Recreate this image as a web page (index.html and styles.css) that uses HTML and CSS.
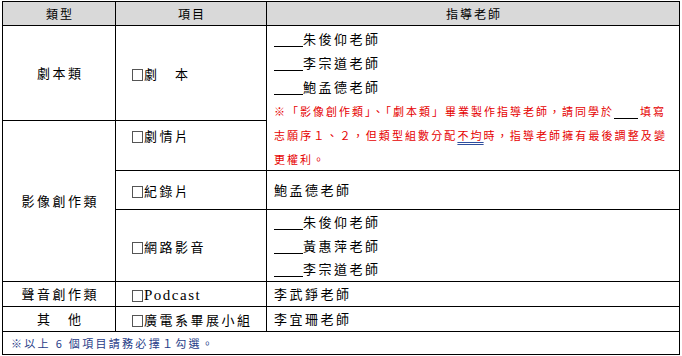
FILE: index.html
```html
<!DOCTYPE html>
<html lang="zh-Hant">
<head>
<meta charset="utf-8">
<link rel="stylesheet" href="styles.css">
</head>
<body>
<div class="tbl">
  <div class="cell head c1">類型</div>
  <div class="cell head c2">項目</div>
  <div class="cell head c3">指導老師</div>

  <div class="cell cat r-script">劇本類</div>
  <div class="cell item mid r-script"><span class="txt"><span class="box"></span>劇　本</span></div>
  <div class="cell names merged">
    <div class="line"><span class="blank"></span>朱俊仰老師</div>
    <div class="line"><span class="blank"></span>李宗道老師</div>
    <div class="line"><span class="blank"></span>鮑孟德老師</div>
    <div class="note">
      <div class="nl nl1">※「影像創作類」、「劇本類」畢業製作指導老師，請同學於<span class="blank small"></span>填寫</div>
      <div class="nl nl2">志願序１、２，但類型組數分配<span class="dbl">不均</span>時，指導老師擁有最後調整及變</div>
      <div class="nl nl3">更權利。</div>
    </div>
  </div>

  <div class="cell cat r-video">影像創作類</div>
  <div class="cell item top"><span class="txt"><span class="box"></span>劇情片</span></div>

  <div class="cell item mid"><span class="txt"><span class="box"></span>紀錄片</span></div>
  <div class="cell teacher">鮑孟德老師</div>

  <div class="cell item mid"><span class="txt"><span class="box"></span>網路影音</span></div>
  <div class="cell names web">
    <div class="line"><span class="blank"></span>朱俊仰老師</div>
    <div class="line"><span class="blank"></span>黃惠萍老師</div>
    <div class="line"><span class="blank"></span>李宗道老師</div>
  </div>

  <div class="cell cat">聲音創作類</div>
  <div class="cell item mid"><span class="txt"><span class="box"></span><span class="latin">Podcast</span></span></div>
  <div class="cell teacher">李武錚老師</div>

  <div class="cell cat">其　他</div>
  <div class="cell item mid"><span class="txt"><span class="box"></span>廣電系畢展小組</span></div>
  <div class="cell teacher">李宜珊老師</div>

  <div class="cell foot">※以上 6 個項目請務必擇１勾選。</div>
</div>
</body>
</html>
```
FILE: styles.css
```css
html, body {
  margin: 0;
  padding: 0;
  background: #fff;
}
body {
  font-family: "Noto Sans CJK TC", "Noto Sans", sans-serif;
  color: #000;
}
.tbl {
  margin: 1px 0 0 2px;
  width: 678px;
  box-sizing: border-box;
  display: grid;
  grid-template-columns: 112px 150px 412px;
  grid-template-rows: 23px 94px 49px 38px 71px 24px 24px 22px;
  gap: 1px;
  padding: 1px;
  background: #000;
}
.cell {
  background: #fff;
  font-size: 13px;
  letter-spacing: 2.5px;
  line-height: 16px;
  display: flex;
  align-items: center;
  white-space: nowrap;
  overflow: hidden;
}
.head {
  background: #d9d9d9;
  justify-content: center;
  font-size: 12px;
  letter-spacing: 2px;
  padding-left: 2px;
}
.cat {
  justify-content: center;
  padding-left: 2.5px;
}
.r-script { grid-row: 2; }
.r-video { grid-column: 1; grid-row: 3 / span 3; }
.merged { grid-column: 3; grid-row: 2 / span 2; }
.item {
  padding-left: 16px;
}
.item.mid .txt {
  padding-top: 2px;
}
.item.top {
  align-items: flex-start;
  padding-top: 7px;
}
.box {
  display: inline-block;
  width: 11px;
  height: 12px;
  box-sizing: border-box;
  border: 1px solid #555;
  margin-right: 1px;
  vertical-align: -2px;
}
.latin {
  font-family: "Liberation Serif", serif;
  font-size: 15px;
  letter-spacing: 1.5px;
}
.teacher {
  padding-left: 7px;
}
.names {
  padding-left: 7px;
  display: block;
}
.names .line {
  height: 24px;
  line-height: 24px;
}
.merged {
  padding-top: 1px;
}
.web .line {
  height: 23.5px;
  line-height: 23.5px;
}
.blank {
  display: inline-block;
  width: 29px;
  height: 12px;
  border-bottom: 1px solid #000;
  vertical-align: -3px;
  margin-right: 0;
}
.blank.small {
  width: 24px;
  margin-right: 2px;
}
.note {
  color: #e60000;
  font-size: 11px;
  letter-spacing: 2px;
}
.nl {
  height: 24px;
  line-height: 24px;
}
.nl2 { letter-spacing: 2.1px; }
.dbl {
  text-decoration: underline double #2e4e9e;
  text-underline-offset: 2px;
}
.foot {
  grid-column: 1 / span 3;
  color: #1f3c88;
  font-size: 11px;
  letter-spacing: 2.3px;
  padding-left: 8px;
}
```
